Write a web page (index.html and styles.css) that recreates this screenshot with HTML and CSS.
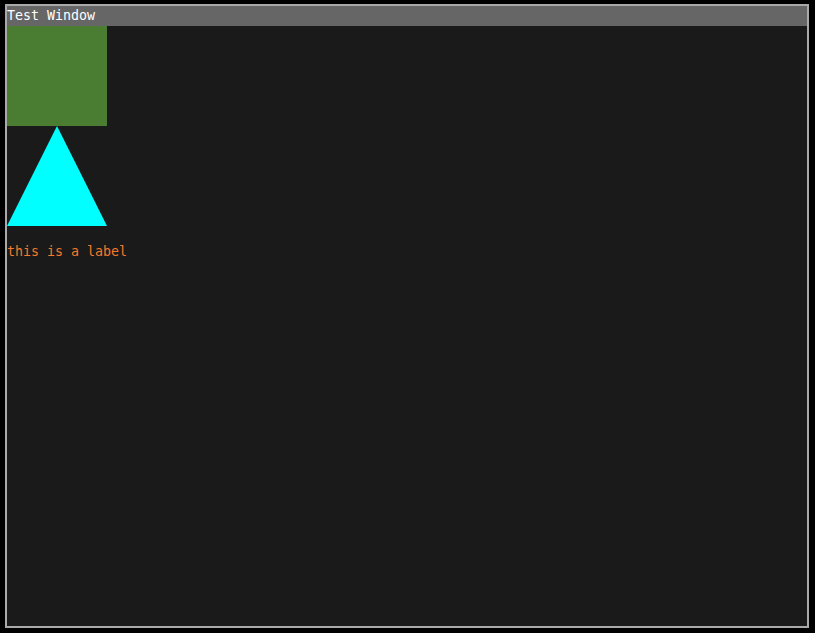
FILE: index.html
```html
<!DOCTYPE html>
<html>
<head>
<meta charset="utf-8">
<link rel="stylesheet" href="styles.css">
</head>
<body>
<div class="window">
  <div class="titlebar">Test Window</div>
  <div class="content">
    <div class="square"></div>
    <svg class="triangle" width="100" height="100" viewBox="0 0 100 100"><polygon points="50,0 100,100 0,100" fill="#00ffff"/></svg>
    <div class="label">this is a label</div>
  </div>
</div>
</body>
</html>
```
FILE: styles.css
```css
html, body {
  margin: 0;
  padding: 0;
  background: #000;
}
body {
  padding: 4px 0 0 5px;
}
.window {
  box-sizing: border-box;
  width: 804px;
  height: 624px;
  border: 2px solid #a9a9a9;
  background: #1a1a1a;
  display: flex;
  flex-direction: column;
  font-family: "DejaVu Sans Mono", monospace;
  font-size: 13.3px;
}
.titlebar {
  height: 20px;
  line-height: 19px;
  background: #666666;
  color: #ffffff;
  white-space: nowrap;
}
.content {
  display: flex;
  flex-direction: column;
  align-items: flex-start;
}
.square {
  width: 100px;
  height: 100px;
  background: #4a7c32;
}
.triangle {
  display: block;
}
.label {
  margin-top: 16px;
  line-height: 20px;
  color: #f5782d;
}
```
